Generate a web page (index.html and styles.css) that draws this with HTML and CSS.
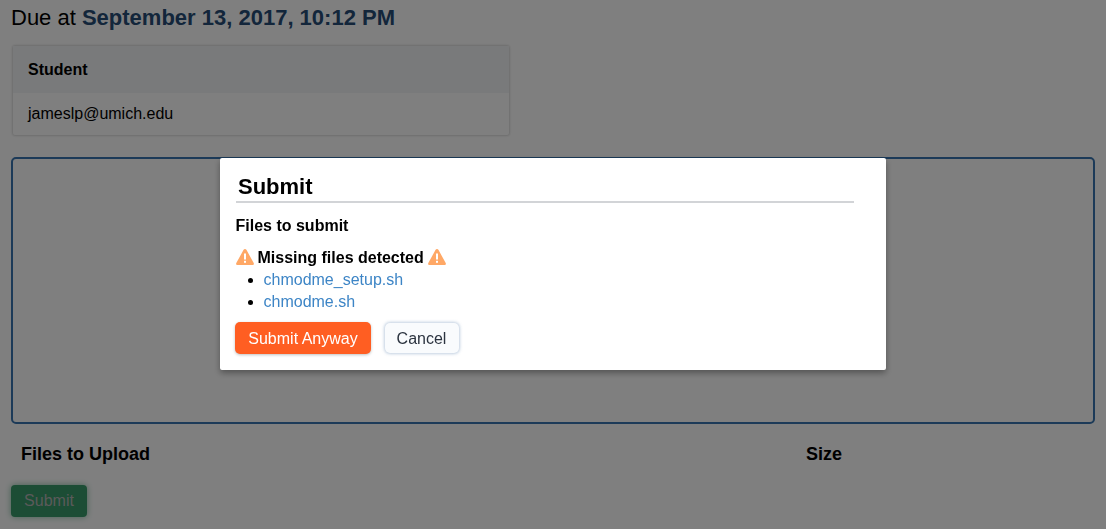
FILE: index.html
```html
<!DOCTYPE html>
<html lang="en">

<head>
    <meta charset="UTF-8">
    <meta name="viewport" content="width=device-width, initial-scale=1.0">
    <title>Submit | Assignment</title>
    <link rel="stylesheet" href="styles.css">
</head>

<body>

    <main class="page">
        <h2 class="due">Due at <span class="due-date">September 13, 2017, 10:12 PM</span></h2>

        <div class="students">
            <div class="students-head">Student</div>
            <div class="students-row">jameslp@umich.edu</div>
        </div>

        <div class="dropzone"></div>

        <div class="upload-head">
            <span class="upload-name">Files to Upload</span>
            <span class="upload-size">Size</span>
        </div>

        <button class="submit-btn" disabled>Submit</button>
    </main>

    <div class="overlay"></div>

    <div class="modal">
        <h3 class="modal-title">Submit</h3>
        <h4 class="modal-sub">Files to submit</h4>
        <p class="missing">
            <svg class="warn" viewBox="0 0 18 16"><path d="M9 0c-.6 0-1.100 .3-1.400 .8L.3 14c-.5 .9 .1 2 1.100 2h15.200c1 0 1.600-1.100 1.100-2L10.400 .8C10.100 .3 9.600 0 9 0z" fill="#ffa866"/><rect x="8" y="4.500" width="2" height="6" fill="#fff"/><rect x="8" y="11.800" width="2" height="2" fill="#fff"/></svg>
            Missing files detected
            <svg class="warn" viewBox="0 0 18 16"><path d="M9 0c-.6 0-1.100 .3-1.400 .8L.3 14c-.5 .9 .1 2 1.100 2h15.200c1 0 1.600-1.100 1.100-2L10.400 .8C10.100 .3 9.600 0 9 0z" fill="#ffa866"/><rect x="8" y="4.500" width="2" height="6" fill="#fff"/><rect x="8" y="11.800" width="2" height="2" fill="#fff"/></svg>
        </p>
        <ul class="missing-list">
            <li><a href="#">chmodme_setup.sh</a></li>
            <li><a href="#">chmodme.sh</a></li>
        </ul>
        <div class="modal-actions">
            <button class="btn-orange">Submit Anyway</button>
            <button class="btn-plain">Cancel</button>
        </div>
    </div>

</body>

</html>
```

FILE: styles.css
```css
html, body {
    height: 100%;
}

body {
    font-family: "Liberation Sans", Arial, sans-serif;
    margin: 0;
    background-color: #fff;
    color: #000;
    overflow: hidden;
}

.page {
    padding: 5px 11px 0;
}

.due {
    margin: 0 0 14px;
    font-size: 22px;
    font-weight: normal;
    line-height: 26px;
}

.due-date {
    font-weight: bold;
    color: #264c76;
}

.students {
    width: 498px;
    margin-left: 1px;
    box-sizing: border-box;
    border: 1px solid #e4e4e4;
    border-radius: 3px;
    box-shadow: 0 0 2px rgba(0, 0, 0, 0.15);
    font-size: 16px;
}

.students-head {
    padding: 0 15px;
    line-height: 47px;
    font-weight: bold;
    background-color: #f3f4f6;
}

.students-row {
    padding: 0 15px;
    line-height: 42px;
}

.dropzone {
    height: 263px;
    margin-top: 21px;
    border: 2px solid #3874b0;
    border-radius: 5px;
}

.upload-head {
    display: flex;
    margin-top: 19px;
    padding-left: 10px;
    font-size: 18px;
    font-weight: bold;
    line-height: 22px;
}

.upload-name {
    width: 785px;
}

.submit-btn {
    display: block;
    width: 76px;
    height: 32px;
    margin-top: 20px;
    padding: 0;
    font: 16px "Liberation Sans", Arial, sans-serif;
    color: #b4b4b4;
    background-color: #389a6a;
    border: none;
    border-radius: 4px;
    box-shadow: 0 0 6px rgba(56, 154, 106, 0.6);
}

.overlay {
    position: fixed;
    inset: 0;
    background-color: rgba(0, 0, 0, 0.5);
}

.modal {
    position: fixed;
    left: 219.5px;
    top: 157.5px;
    width: 666.5px;
    height: 212.5px;
    box-sizing: border-box;
    padding: 16px 16px 0;
    background-color: #fff;
    border-radius: 2px;
    box-shadow: 0 3px 6px rgba(0, 0, 0, 0.35);
}

.modal-title {
    width: 618.5px;
    box-sizing: border-box;
    margin: 0;
    padding: 0 2.5px 1px;
    font-size: 22px;
    line-height: 26px;
    border-bottom: 2px solid #d2d4d7;
}

.modal-sub {
    margin: 13px 0 0;
    font-size: 16px;
    line-height: 20px;
}

.missing {
    display: flex;
    align-items: center;
    gap: 4px;
    margin: 11.5px 0 0;
    font-size: 16px;
    font-weight: bold;
    line-height: 22px;
}

.warn {
    width: 18px;
    height: 16px;
    margin-top: -2px;
}

.missing-list {
    margin: 0;
    padding-left: 28px;
    font-size: 16px;
    line-height: 22px;
}

.missing-list a {
    color: #3d85c6;
    text-decoration: none;
}

.modal-actions {
    display: flex;
    align-items: center;
    gap: 13.5px;
    margin: 9px 0 0 -0.5px;
}

.modal-actions button {
    padding: 1px 0 0;
    font: 16px "Liberation Sans", Arial, sans-serif;
    border: none;
    border-radius: 5px;
}

.btn-orange {
    width: 136px;
    height: 32px;
    color: #fff;
    background-color: #ff5e22;
    box-shadow: 0 1px 3px rgba(0, 0, 0, 0.25);
}

.btn-plain {
    width: 74px;
    height: 30px;
    color: #2c3440;
    background-color: #f9fbfd;
    box-shadow: 0 0 3px 1px rgba(80, 120, 170, 0.35);
}
```
